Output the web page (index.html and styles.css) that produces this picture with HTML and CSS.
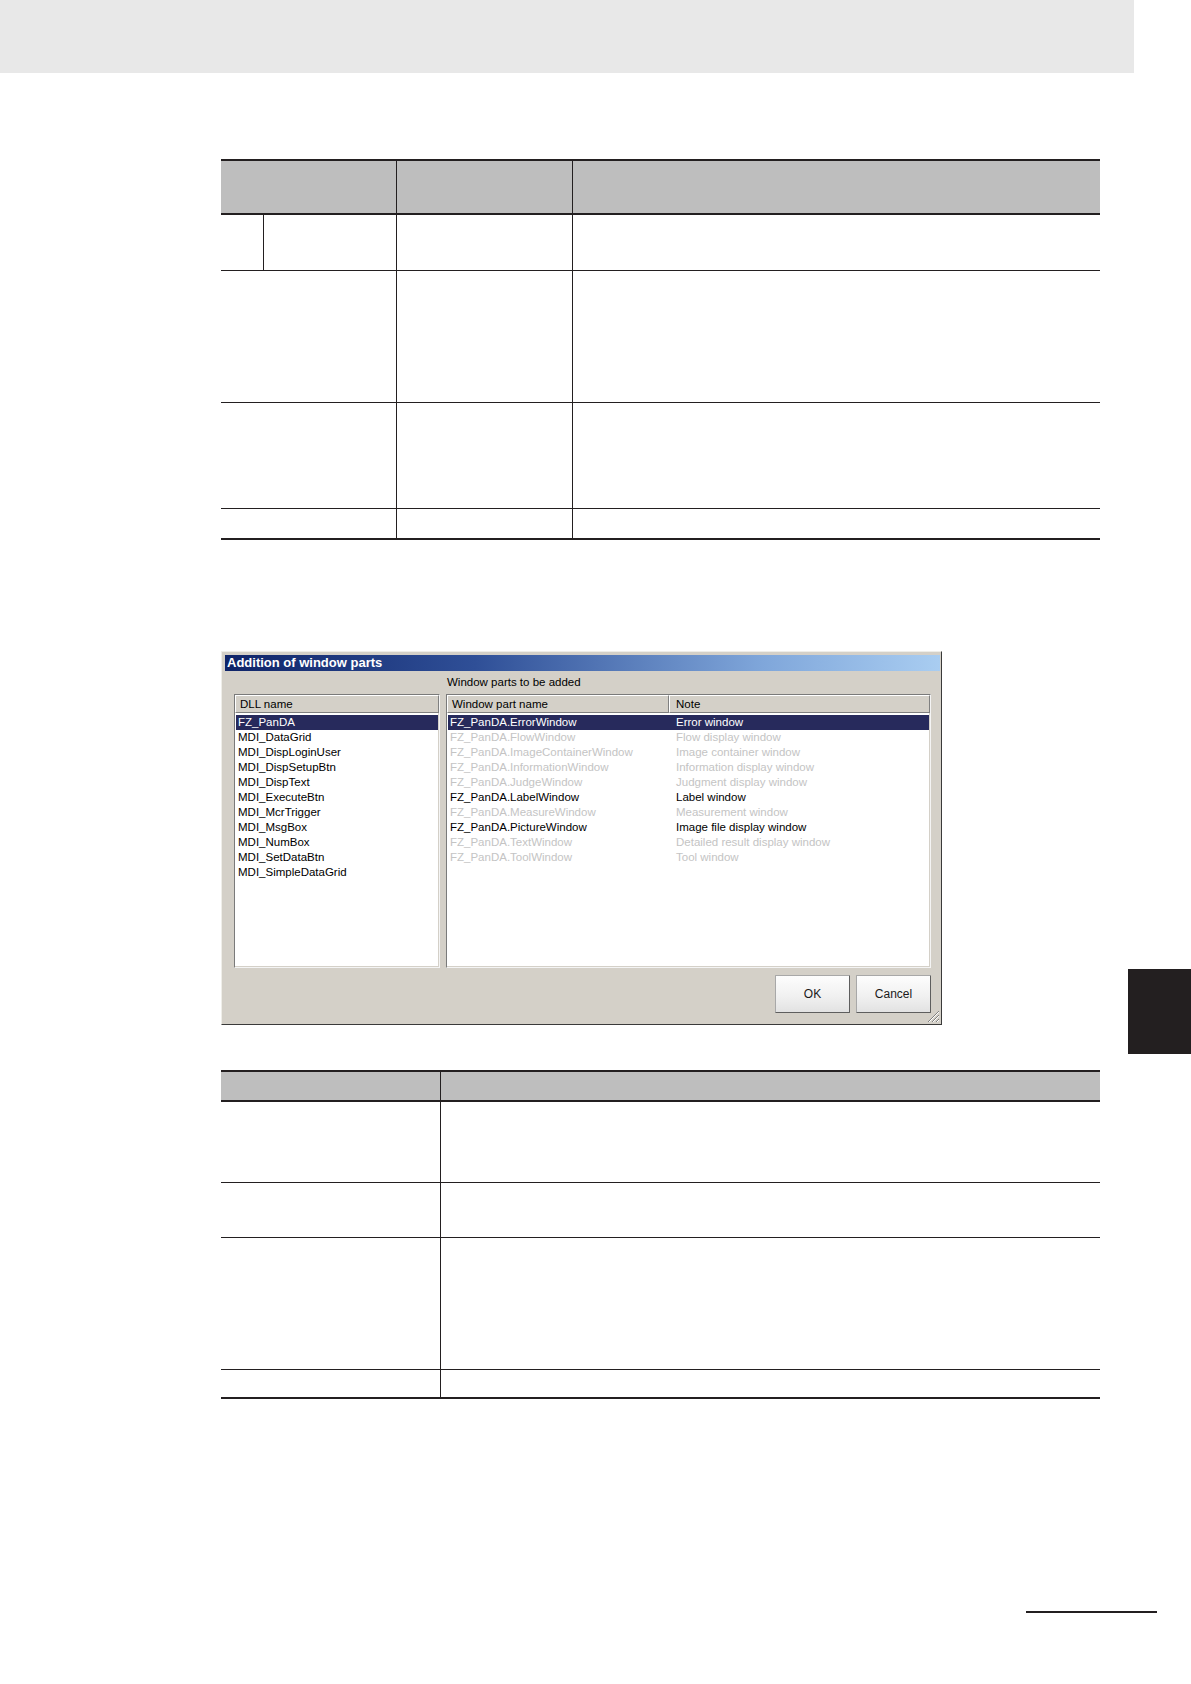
FILE: index.html
```html
<!DOCTYPE html>
<html lang="en">
<head>
<meta charset="utf-8">
<title>Addition of window parts</title>
<link rel="stylesheet" href="styles.css">
</head>
<body>
<div class="page">
  <div class="topbar"></div>

  <main class="content">
    <div class="tbl t1">
      <div class="row hdr"><div class="c"></div><div class="c"></div><div class="c"></div></div>
      <div class="row r1"><div class="c"></div><div class="c"></div><div class="c"></div><div class="c"></div></div>
      <div class="row r2"><div class="c"></div><div class="c"></div><div class="c"></div></div>
      <div class="row r3"><div class="c"></div><div class="c"></div><div class="c"></div></div>
      <div class="row r4 last"><div class="c"></div><div class="c"></div><div class="c"></div></div>
    </div>

    <div class="dialog">
      <div class="titlebar">Addition of window parts</div>
      <div class="dlg-body">
        <div class="label">Window parts to be added</div>

        <div class="listbox left-list">
          <div class="lhdr"><span class="hcell">DLL name</span></div>
          <div class="items">
            <div class="item sel">FZ_PanDA</div>
            <div class="item">MDI_DataGrid</div>
            <div class="item">MDI_DispLoginUser</div>
            <div class="item">MDI_DispSetupBtn</div>
            <div class="item">MDI_DispText</div>
            <div class="item">MDI_ExecuteBtn</div>
            <div class="item">MDI_McrTrigger</div>
            <div class="item">MDI_MsgBox</div>
            <div class="item">MDI_NumBox</div>
            <div class="item">MDI_SetDataBtn</div>
            <div class="item">MDI_SimpleDataGrid</div>
          </div>
        </div>

        <div class="listbox right-list">
          <div class="rhdr">
            <span class="hcell h1">Window part name</span>
            <span class="hcell h2">Note</span>
          </div>
          <div class="items">
            <div class="ritem sel"><span class="n">FZ_PanDA.ErrorWindow</span><span class="d">Error window</span></div>
            <div class="ritem off"><span class="n">FZ_PanDA.FlowWindow</span><span class="d">Flow display window</span></div>
            <div class="ritem off"><span class="n">FZ_PanDA.ImageContainerWindow</span><span class="d">Image container window</span></div>
            <div class="ritem off"><span class="n">FZ_PanDA.InformationWindow</span><span class="d">Information display window</span></div>
            <div class="ritem off"><span class="n">FZ_PanDA.JudgeWindow</span><span class="d">Judgment display window</span></div>
            <div class="ritem"><span class="n">FZ_PanDA.LabelWindow</span><span class="d">Label window</span></div>
            <div class="ritem off"><span class="n">FZ_PanDA.MeasureWindow</span><span class="d">Measurement window</span></div>
            <div class="ritem"><span class="n">FZ_PanDA.PictureWindow</span><span class="d">Image file display window</span></div>
            <div class="ritem off"><span class="n">FZ_PanDA.TextWindow</span><span class="d">Detailed result display window</span></div>
            <div class="ritem off"><span class="n">FZ_PanDA.ToolWindow</span><span class="d">Tool window</span></div>
          </div>
        </div>

        <div class="buttons">
          <button class="btn" type="button">OK</button>
          <button class="btn" type="button">Cancel</button>
        </div>
      </div>
      <svg class="grip" width="13" height="13" viewBox="0 0 13 13" aria-hidden="true">
        <g stroke-width="1">
          <line x1="12" y1="1" x2="1" y2="12" stroke="#808080"/>
          <line x1="12" y1="2" x2="2" y2="12" stroke="#ffffff"/>
          <line x1="12" y1="5" x2="5" y2="12" stroke="#808080"/>
          <line x1="12" y1="6" x2="6" y2="12" stroke="#ffffff"/>
          <line x1="12" y1="9" x2="9" y2="12" stroke="#808080"/>
          <line x1="12" y1="10" x2="10" y2="12" stroke="#ffffff"/>
        </g>
      </svg>
    </div>

    <div class="tbl t2">
      <div class="row hdr"><div class="c"></div><div class="c"></div></div>
      <div class="row r1"><div class="c"></div><div class="c"></div></div>
      <div class="row r2"><div class="c"></div><div class="c"></div></div>
      <div class="row r3"><div class="c"></div><div class="c"></div></div>
      <div class="row r4 last"><div class="c"></div><div class="c"></div></div>
    </div>
  </main>

  <footer class="footer"><span class="rule"></span></footer>

  <div class="side-tab"></div>
</div>
</body>
</html>
```

FILE: styles.css
```css
html, body {
  margin: 0;
  padding: 0;
  background: #ffffff;
}

body {
  font-family: "Liberation Sans", Arial, sans-serif;
  color: #000;
}

.page {
  position: relative;
  width: 1191px;
  height: 1684px;
  overflow: hidden;
  background: #ffffff;
}

.topbar {
  width: 1134px;
  height: 73px;
  background: #e8e8e8;
}

.content {
  margin-left: 221px;
  width: 879px;
}

/* ---------- tables ---------- */
.tbl {
  border-top: 2px solid #231f20;
}

.row {
  display: grid;
  box-sizing: border-box;
  border-bottom: 1px solid #231f20;
}

.row .c + .c {
  border-left: 1px solid #231f20;
}

.row.hdr {
  background: #bebebe;
  border-bottom: 2px solid #231f20;
}

.row.last {
  border-bottom: 2px solid #231f20;
}

.t1 {
  margin-top: 86px;
}

.t1 .row { grid-template-columns: 175px 176px 1fr; }
.t1 .row.r1 { grid-template-columns: 42px 133px 176px 1fr; }
.t1 .hdr { height: 54px; }
.t1 .r1 { height: 56px; }
.t1 .r2 { height: 132px; }
.t1 .r3 { height: 106px; }
.t1 .r4 { height: 31px; }

.t2 {
  margin-top: 45px;
}

.t2 .row { grid-template-columns: 219px 1fr; }
.t2 .hdr { height: 30px; }
.t2 .r1 { height: 81px; }
.t2 .r2 { height: 55px; }
.t2 .r3 { height: 132px; }
.t2 .r4 { height: 29px; }

/* ---------- dialog ---------- */
.dialog {
  position: relative;
  margin-top: 111px;
  box-sizing: border-box;
  width: 721px;
  height: 374px;
  background: #d4d0c8;
  border: 1px solid;
  border-color: #efeee9 #3a3a3a #3a3a3a #efeee9;
  padding: 3px;
  display: flex;
  flex-direction: column;
}

.titlebar {
  height: 16px;
  margin-right: -2px;
  background: linear-gradient(to right, #0f2468 0%, #2f4f97 35%, #7fa6da 75%, #a9cdf1 100%);
  color: #ffffff;
  font-weight: bold;
  font-size: 13px;
  line-height: 16px;
  padding-left: 2px;
  white-space: nowrap;
}

.dlg-body {
  flex: 1;
  display: grid;
  grid-template-columns: 206px 485px;
  grid-template-rows: 23px 274px 1fr;
  column-gap: 6px;
  padding: 0 7px 0 9px;
}

.label {
  grid-column: 2;
  grid-row: 1;
  font-size: 11.5px;
  line-height: 23px;
  padding-left: 1px;
  white-space: nowrap;
}

.listbox {
  grid-row: 2;
  box-sizing: border-box;
  background: #ffffff;
  border: 1px solid;
  border-color: #7a7a7a #f4f4f4 #f4f4f4 #7a7a7a;
  box-shadow: inset -1px -1px 0 #d4d0c8;
  font-size: 11.5px;
  overflow: hidden;
}

.left-list { grid-column: 1; }
.right-list { grid-column: 2; }

.lhdr,
.rhdr {
  height: 18px;
  display: flex;
}

.hcell {
  box-sizing: border-box;
  height: 18px;
  line-height: 16px;
  background: #d4d0c8;
  border: 1px solid;
  border-color: #ffffff #808080 #808080 #ffffff;
  white-space: nowrap;
}

.lhdr .hcell {
  flex: 1;
  padding-left: 4px;
}

.rhdr .h1 {
  width: 222px;
  padding-left: 4px;
}

.rhdr .h2 {
  flex: 1;
  padding-left: 6px;
}

.items {
  padding: 2px 1px 0 1px;
}

.item {
  height: 15px;
  line-height: 15px;
  padding-left: 2px;
  white-space: nowrap;
}

.ritem {
  display: grid;
  grid-template-columns: 221px 1fr;
  height: 15px;
  line-height: 15px;
  white-space: nowrap;
}

.ritem .n { padding-left: 2px; overflow: hidden; }
.ritem .d { padding-left: 7px; }

.sel {
  background: #272a5c;
  color: #ffffff;
}

.off {
  color: #c4c4c4;
}

.buttons {
  grid-column: 1 / -1;
  grid-row: 3;
  display: flex;
  justify-content: flex-end;
  align-items: flex-start;
  gap: 6px;
  padding-top: 7px;
}

.btn {
  box-sizing: border-box;
  width: 75px;
  height: 38px;
  margin: 0;
  padding: 0;
  font-family: "Liberation Sans", Arial, sans-serif;
  font-size: 12px;
  color: #1a1a1a;
  background: linear-gradient(to bottom, #fdfdfd 0%, #f1f1f1 55%, #e2e2e2 100%);
  border: 1px solid;
  border-color: #a8a8a8 #5e5e5e #5e5e5e #a8a8a8;
  border-radius: 1px;
}

.grip {
  position: absolute;
  right: 1px;
  bottom: 1px;
}

/* ---------- page furniture ---------- */
.footer {
  margin-top: 212px;
  padding-left: 1026px;
  display: flex;
}

.footer .rule {
  display: block;
  width: 131px;
  height: 2px;
  background: #231f20;
}

.side-tab {
  position: absolute;
  left: 1128px;
  top: 969px;
  width: 63px;
  height: 85px;
  background: #231f20;
}
```
